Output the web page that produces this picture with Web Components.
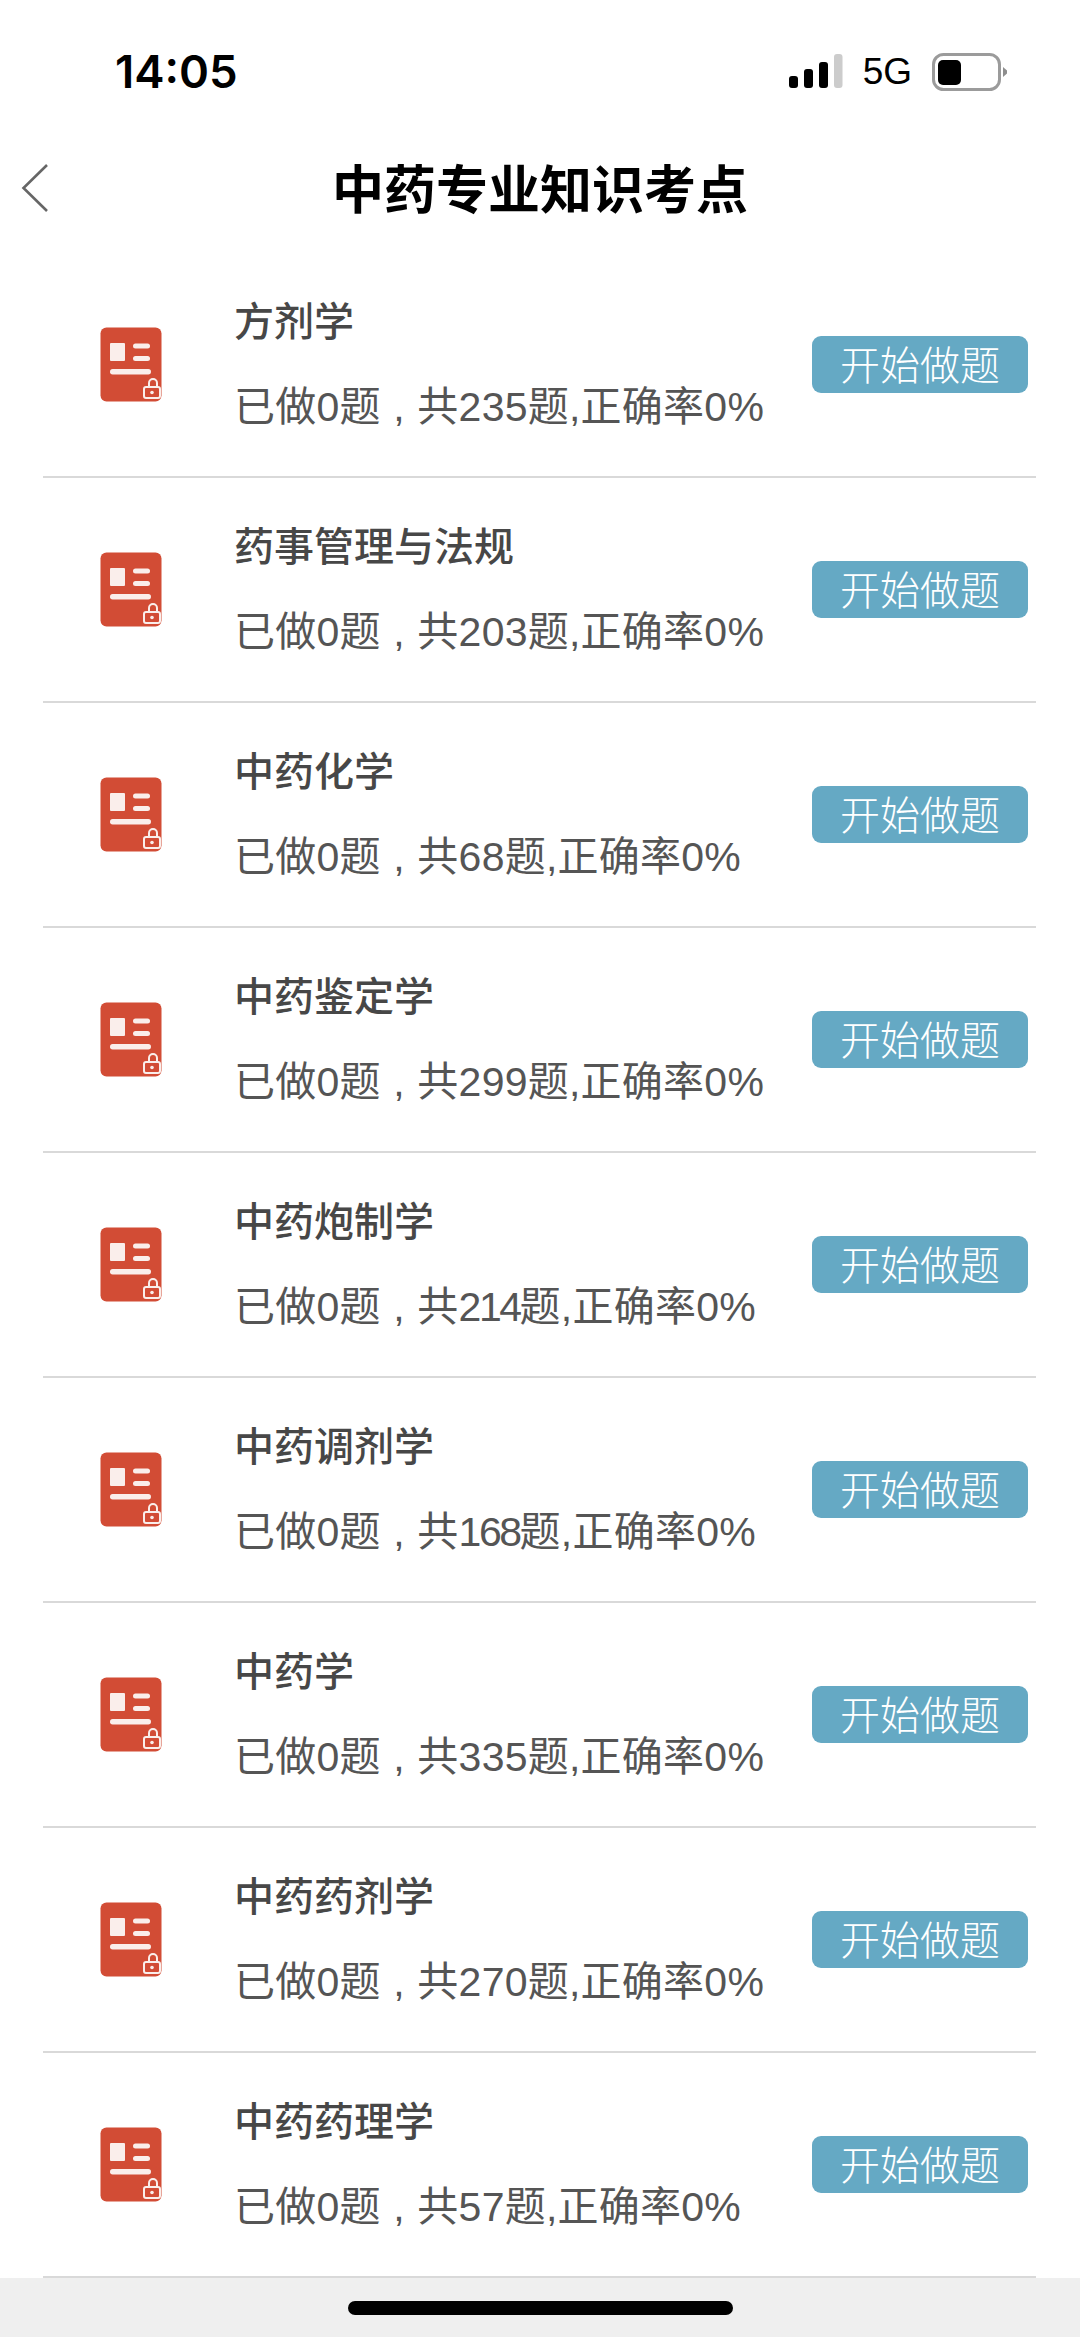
<!DOCTYPE html>
<html lang="zh-CN"><head><meta charset="utf-8"><title>中药专业知识考点</title>
<style>
html,body{margin:0;padding:0;background:#fff}
body{width:1080px;height:2337px;overflow:hidden;font-family:"Liberation Sans","Noto Sans CJK SC",sans-serif}
</style></head><body>
<app-screen>
<status-bar></status-bar>
<nav-bar>中药专业知识考点</nav-bar>
<topic-row name="方剂学" total="235"></topic-row>
<topic-row name="药事管理与法规" total="203"></topic-row>
<topic-row name="中药化学" total="68"></topic-row>
<topic-row name="中药鉴定学" total="299"></topic-row>
<topic-row name="中药炮制学" total="214"></topic-row>
<topic-row name="中药调剂学" total="168"></topic-row>
<topic-row name="中药学" total="335"></topic-row>
<topic-row name="中药药剂学" total="270"></topic-row>
<topic-row name="中药药理学" total="57"></topic-row>
<home-bar></home-bar>
</app-screen>
<script>
class AppScreen extends HTMLElement{constructor(){super();this.attachShadow({mode:'open'}).innerHTML=`<style>:host{display:flex;flex-direction:column;width:1080px;height:2337px;background:#fff}</style><slot></slot>`;}}
class StatusBar extends HTMLElement{constructor(){super();this.attachShadow({mode:'open'}).innerHTML=`<style>
:host{display:flex;align-items:center;justify-content:space-between;height:126px;box-sizing:border-box;padding:17px 73px 0 115px;color:#000;font-family:"Liberation Sans",sans-serif}
.time{font-family:Inter,sans-serif;font-size:45.500px;font-weight:600;line-height:1}
.right{display:flex;align-items:center;gap:20px}
.g{font-size:37px;line-height:1}
svg{display:block}
</style><span class="time">14:05</span><div class="right">
<svg width="54" height="36" viewBox="0 0 54 36"><rect x="0" y="22" width="9" height="12" rx="3"/><rect x="15" y="15" width="9" height="19" rx="3"/><rect x="30" y="8" width="9" height="26" rx="3"/><rect x="45" y="0" width="8.500" height="34" rx="3" fill="#ccc"/></svg>
<span class="g">5G</span>
<svg width="75" height="38" viewBox="0 0 75 38"><rect x="1.500" y="1.500" width="66" height="35" rx="10" fill="#fff" stroke="#9b9b9b" stroke-width="3"/><rect x="6" y="7" width="23" height="25" rx="5"/><path d="M71 14l4 3.500v3l-4 3.500z" fill="#8e8e8e"/></svg>
</div>`;}}
class NavBar extends HTMLElement{constructor(){super();this.attachShadow({mode:'open'}).innerHTML=`<style>
:host{display:grid;grid-template-columns:1fr auto 1fr;align-items:center;height:127px;box-sizing:border-box;padding:0 22px 3px;color:#000}
.t{font-size:52px;font-weight:700;line-height:1;font-family:"Noto Sans CJK SC",sans-serif;padding-bottom:3px}
svg{display:block;margin-left:-1px}
</style><svg width="28" height="50" viewBox="0 0 28 50"><path d="M26 2L2.500 25 26 48" fill="none" stroke="#666" stroke-width="2.600"/></svg><span class="t"><slot></slot></span><span></span>`;}}
class TopicIcon extends HTMLElement{constructor(){super();this.attachShadow({mode:'open'}).innerHTML=`<style>:host{display:block;width:62px;height:75px}svg{display:block}</style>
<svg width="62" height="75" viewBox="0 0 62 75"><rect x="0.500" y="0.500" width="61" height="74" rx="6" fill="#d24c35"/><rect x="10" y="16" width="15" height="18" rx="1" fill="#faeeeb"/><rect x="33" y="16.500" width="17" height="5" rx="2.500" fill="#faeeeb"/><rect x="33" y="29" width="17" height="5" rx="2.500" fill="#faeeeb"/><rect x="10" y="42" width="41" height="5.500" rx="2.700" fill="#faeeeb"/>
<path d="M49 60v-4a4 4 0 0 1 8 0v4" fill="none" stroke="#faeeeb" stroke-width="2"/><rect x="44" y="60" width="16" height="11" rx="2" fill="#d24c35" stroke="#faeeeb" stroke-width="2"/><circle cx="52" cy="65.500" r="1.800" fill="#faeeeb"/></svg>`;}}
class StartButton extends HTMLElement{constructor(){super();this.attachShadow({mode:'open'}).innerHTML=`<style>:host{display:flex;align-items:center;justify-content:center;box-sizing:border-box;width:216px;height:57px;padding-bottom:4px;border-radius:9px;background:#65a9c4;color:#fff;font-size:40px;line-height:1;font-family:"Noto Sans CJK SC",sans-serif;font-weight:300}</style><slot></slot>`;}}
class TopicRow extends HTMLElement{constructor(){super();const n=this.getAttribute('name'),t=this.getAttribute('total');
const d=t.includes('1')?`<span class="tight">${t}</span>`:t;
this.attachShadow({mode:'open'}).innerHTML=`<style>
:host{display:flex;align-items:center;height:225px;box-sizing:border-box;margin:0 44px 0 43px;padding:0 8px 0 57px;border-bottom:2px solid #d9d9d9;color:#474747}
.txt{flex:1;display:flex;flex-direction:column;gap:38px;margin:0 0 4px 72px}
.n{font-size:40px;line-height:50px;font-family:"Noto Sans CJK SC",sans-serif;font-weight:500}
.s{font-size:41px;line-height:50px;letter-spacing:.25px;word-spacing:.8px;font-family:"Liberation Sans","Noto Sans CJK SC",sans-serif;color:#555}
.tight{letter-spacing:-2.500px}
</style><topic-icon></topic-icon><div class="txt"><div class="n">${n}</div><div class="s">已做0题 , 共${d}题,正确率0%</div></div><start-button>开始做题</start-button>`;}}
class HomeBar extends HTMLElement{constructor(){super();this.attachShadow({mode:'open'}).innerHTML=`<style>:host{display:flex;flex:1;align-items:center;justify-content:center;background:#efefef}i{display:block;width:385px;height:14px;border-radius:7px;background:#000}</style><i></i>`;}}
customElements.define('app-screen',AppScreen);
customElements.define('status-bar',StatusBar);
customElements.define('nav-bar',NavBar);
customElements.define('topic-icon',TopicIcon);
customElements.define('start-button',StartButton);
customElements.define('topic-row',TopicRow);
customElements.define('home-bar',HomeBar);
</script>
</body></html>
